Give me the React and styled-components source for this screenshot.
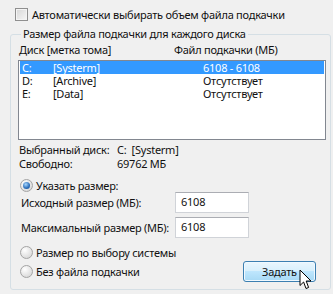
import * as React from "react";
import styled, { createGlobalStyle } from "styled-components";

const Global = createGlobalStyle`
  html, body { margin: 0; padding: 0; background: #f0f0f0; }
  body {
    font-family: "Noto Sans", "Open Sans", sans-serif;
    font-size: 11px;
    letter-spacing: -0.25px;
    color: #111;
    white-space: nowrap;
  }
`;

const Dialog = styled.div`
  width: 333px;
  height: 294px;
  box-sizing: border-box;
  padding: 7px 2px 0 10px;
`;

const CheckRow = styled.label`
  display: flex;
  align-items: center;
  gap: 4px;
  margin-left: 5px;
  height: 14px;
`;

const CheckBox = styled.span`
  width: 11px;
  height: 11px;
  border: 1px solid #8f8f8f;
  background: linear-gradient(135deg, #d6d6d6, #f7f7f7);
  box-shadow: inset 0 0 0 1px #f4f4f4;
`;

const Group = styled.fieldset`
  margin: 6px 0 0 0;
  padding: 0 4px 0 7px;
  border: 1px solid #d5dfe5;
  border-radius: 3px;
  height: 263px;
  box-sizing: border-box;
  min-width: 0;
`;

const Legend = styled.legend`
  padding: 0 2px;
  margin-left: 3px;
  line-height: 14px;
`;

const Header = styled.div`
  display: grid;
  grid-template-columns: 155px 1fr;
  height: 17px;
  align-items: center;
  padding-left: 1px;
`;

const List = styled.div`
  height: 80px;
  box-sizing: border-box;
  border: 1px solid #828790;
  background: #fff;
  margin-top: 2px;
  padding: 0 1px;
`;

const Row = styled.div`
  display: grid;
  grid-template-columns: 31px 150px 1fr;
  height: 13px;
  align-items: center;
  padding-left: 2px;
  background: ${(p) => (p.$selected ? "#3399ff" : "transparent")};
  color: ${(p) => (p.$selected ? "#fff" : "#111")};
  line-height: 13px;
`;

const Info = styled.div`
  display: grid;
  grid-template-columns: 98px auto;
  margin-top: 3px;
  padding-left: 1px;
  line-height: 14px;
`;

const RadioRow = styled.label`
  display: flex;
  align-items: center;
  gap: 3px;
  margin-left: 2px;
  margin-top: ${(p) => p.$mt || 0}px;
  height: 14px;
`;

const Radio = styled.span`
  width: 11px;
  height: 11px;
  border-radius: 50%;
  border: 1px solid #a4a4a4;
  background: radial-gradient(circle at 35% 30%, #ffffff, #cfcfcf);
  display: flex;
  align-items: center;
  justify-content: center;
  &::after {
    content: "";
    width: 7px;
    height: 7px;
    border-radius: 50%;
    background: radial-gradient(circle at 40% 35%, #a8d8ff, #2a6cb8 60%, #1b4f8f);
    display: ${(p) => (p.$checked ? "block" : "none")};
  }
`;

const Fields = styled.div`
  display: flex;
  flex-direction: column;
  gap: 4px;
`;

const Field = styled.div`
  display: grid;
  grid-template-columns: 154px 74px;
  align-items: center;
  padding-left: 3px;
`;

const Input = styled.div`
  height: 21px;
  box-sizing: border-box;
  border: 1px solid #d0d3d8;
  border-top-color: #abadb3;
  background: #fff;
  padding: 2px 0 0 5px;
  line-height: 14px;
`;

const Bottom = styled.div`
  display: flex;
  justify-content: space-between;
  align-items: flex-start;
  margin-top: 7px;
`;

const Radios = styled.div`
  display: flex;
  flex-direction: column;
  gap: 5px;
`;

const Button = styled.div`
  width: 71px;
  height: 19px;
  margin-top: 16px;
  margin-right: 10px;
  border: 1px solid #3c7fb1;
  border-radius: 3px;
  background: linear-gradient(#eaf6fd 0%, #d9f0fc 45%, #bee6fd 50%, #a7d9f5 100%);
  box-shadow: inset 0 0 0 1px #f0f9ff;
  display: flex;
  align-items: center;
  justify-content: center;
  position: relative;
`;

const Cursor = styled.svg`
  position: absolute;
  left: 55px;
  top: 7px;
`;

export default function App() {
  return (
    <>
      <Global />
      <Dialog>
        <CheckRow>
          <CheckBox />
          Автоматически выбирать объем файла подкачки
        </CheckRow>
        <Group>
          <Legend>Размер файла подкачки для каждого диска</Legend>
          <Header>
            <span>Диск [метка тома]</span>
            <span>Файл подкачки (МБ)</span>
          </Header>
          <List>
            <Row $selected>
              <span>C:</span>
              <span>[Systerm]</span>
              <span>6108 - 6108</span>
            </Row>
            <Row>
              <span>D:</span>
              <span>[Archive]</span>
              <span>Отсутствует</span>
            </Row>
            <Row>
              <span>E:</span>
              <span>[Data]</span>
              <span>Отсутствует</span>
            </Row>
          </List>
          <Info>
            <span>Выбранный диск:</span>
            <span>C:&nbsp; [Systerm]</span>
            <span>Свободно:</span>
            <span>69762 МБ</span>
          </Info>
          <RadioRow $mt={7}>
            <Radio $checked />
            Указать размер:
          </RadioRow>
          <Fields>
            <Field>
              <span>Исходный размер (МБ):</span>
              <Input>6108</Input>
            </Field>
            <Field>
              <span>Максимальный размер (МБ):</span>
              <Input>6108</Input>
            </Field>
          </Fields>
          <Bottom>
            <Radios>
              <RadioRow>
                <Radio />
                Размер по выбору системы
              </RadioRow>
              <RadioRow>
                <Radio />
                Без файла подкачки
              </RadioRow>
            </Radios>
            <Button>
              Задать
              <Cursor width="13" height="22" viewBox="0 0 13 22">
                <path
                  d="M1 1 L1 16.5 L4.6 13 L7 19.5 L9.6 18.5 L7.2 12 L12 12 Z"
                  fill="#fff"
                  stroke="#000"
                  strokeWidth="1"
                  strokeLinejoin="round"
                />
              </Cursor>
            </Button>
          </Bottom>
        </Group>
      </Dialog>
    </>
  );
}
